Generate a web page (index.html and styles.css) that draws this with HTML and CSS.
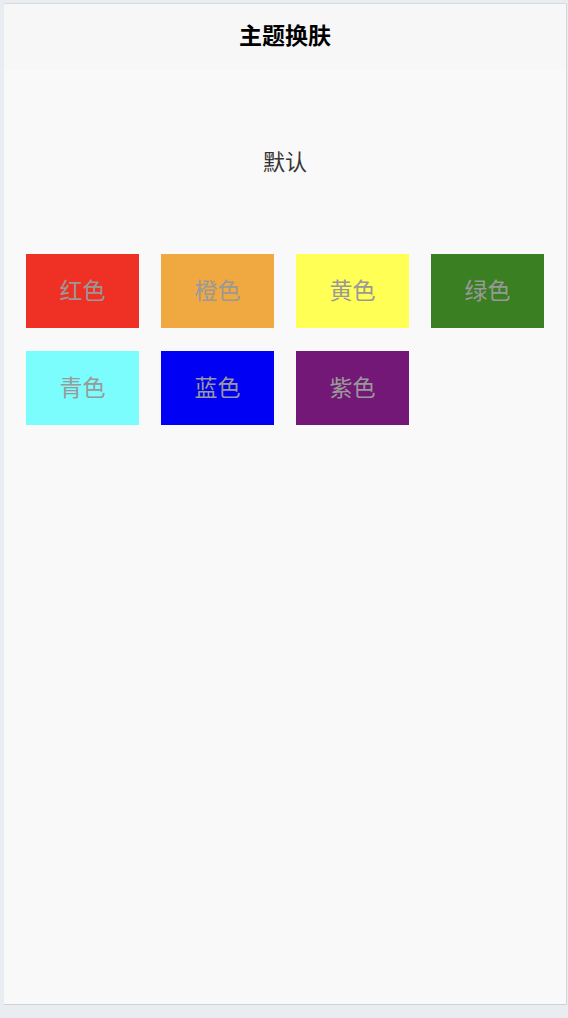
FILE: index.html
```html
<!DOCTYPE html>
<html>
<head>
	<title>主题换肤</title>
	<meta charset="UTF-8">
	<link rel="stylesheet" href="styles.css">
</head>
<body>
	<div id="Phone">
		<div id="Header">主题换肤</div>
		<div id="Current">默认</div>
		<div id="Themes">
			<div class="theme red">红色</div>
			<div class="theme orange">橙色</div>
			<div class="theme yellow">黄色</div>
			<div class="theme green">绿色</div>
			<div class="theme cyan">青色</div>
			<div class="theme blue">蓝色</div>
			<div class="theme purple">紫色</div>
		</div>
	</div>
</body>
</html>
```

FILE: styles.css
```css
body {
	margin: 0px;
	background-color: #e9ecf0;
	font-family: "Noto Sans CJK SC", "Noto Sans", sans-serif;
}

#Phone {
	box-sizing: border-box;
	margin: 3px 1px 0px 4px;
	height: 1002px;
	background-color: #f9f9f9;
	border-top: 1px solid #d9dbdf;
	border-right: 1px solid #d3d5d9;
	border-bottom: 1px solid #cfd1d5;
}

#Header {
	height: 66px;
	line-height: 60px;
	text-align: center;
	font-size: 23px;
	font-weight: bold;
	color: #000000;
	background-color: #f7f7f8;
}

#Current {
	margin-top: 72px;
	height: 40px;
	line-height: 36px;
	text-align: center;
	font-size: 22px;
	color: #333333;
}

#Themes {
	display: grid;
	grid-template-columns: repeat(4, 113px);
	gap: 23px 22px;
	padding: 0px 22px;
	margin-top: 72px;
}

.theme {
	height: 74px;
	line-height: 70px;
	text-align: center;
	font-size: 23px;
	color: #999999;
}

.red { background-color: #ee3124; }
.orange { background-color: #f0a840; }
.yellow { background-color: #ffff55; }
.green { background-color: #3a7f22; }
.cyan { background-color: #7bfdfe; }
.blue { background-color: #0000f5; }
.purple { background-color: #731877; }
```
